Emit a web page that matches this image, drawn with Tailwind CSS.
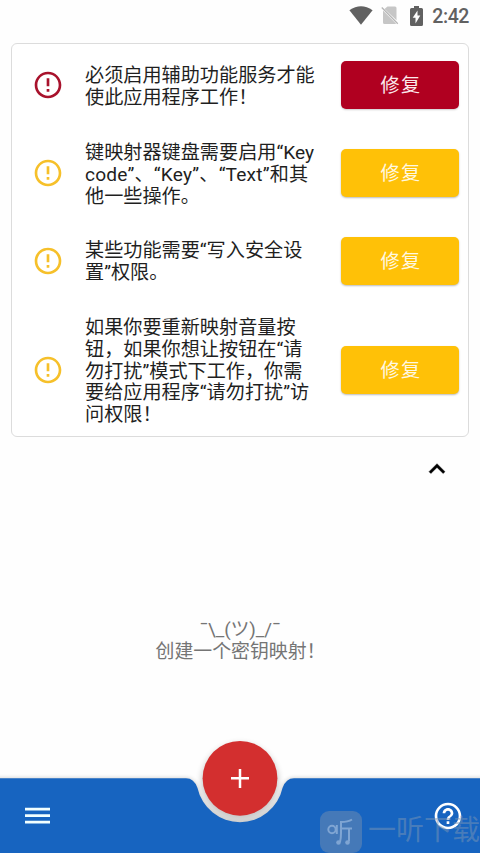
<!DOCTYPE html>
<html lang="zh-CN">
<head>
<meta charset="utf-8">
<title>Key Mapper</title>
<script src="https://cdn.jsdelivr.net/npm/@tailwindcss/browser@4"></script>
</head>
<body class="bg-white">
<svg class="hidden">
  <symbol id="alert" viewBox="0 0 24 24"><path d="M11 15h2v2h-2zm0-8h2v6h-2zm.99-5C6.47 2 2 6.48 2 12s4.47 10 9.99 10C17.52 22 22 17.52 22 12S17.52 2 11.99 2zM12 20c-4.42 0-8-3.58-8-8s3.58-8 8-8 8 3.58 8 8-3.58 8-8 8z" fill="currentColor"/></symbol>
</svg>
<main class="relative flex h-[853px] w-[480px] flex-col overflow-hidden bg-[#fefefe] font-[Roboto,'Noto_Sans_CJK_SC',sans-serif] text-[19.15px] leading-[21.8px] text-[#1f1f1f]">
  <header class="flex h-[43px] shrink-0 items-start justify-end pr-[11px] pt-[5px] text-[#616161]">
    <svg class="mr-[8px] mt-px h-[19px] w-[24px]" viewBox="0 0 24 19"><path d="M.4 4.2Q12-3.6 23.6 4.2L12 18.8z" fill="currentColor"/></svg>
    <svg class="mr-[11px] mt-[1px] h-[19px] w-[18px]" viewBox="0 0 18 19"><path d="M6.500.5H14q1.500 0 1.500 1.500v12.200L3.500 2.900zM2 4.500l13 13q-.4.500-1 .500H3.500Q2 18 2 16.500z" fill="#c6c6c6"/><path d="M.8 1.500l16 16.300" stroke="#b5b5b5" stroke-width="1.300"/></svg>
    <svg class="mr-[9px] mt-px h-[20px] w-[13px]" viewBox="0 0 13 20"><path d="M4 0h5v2h2.500Q13 2 13 3.500v15q0 1.500-1.500 1.500h-10Q0 20 0 18.500v-15Q0 2 1.500 2H4z" fill="currentColor"/><path d="M7.500 4.500v5h2.800L5.500 17.500v-5.700H2.700z" fill="#fff"/></svg>
    <span class="pt-[1px] text-[19.5px] font-medium leading-[22px] tracking-[-0.4px]">2:42</span>
  </header>

  <section class="ml-[11px] h-[394px] w-[458px] shrink-0 rounded-[6px] border-[1.5px] border-[#dcdcdc] bg-white">
    <div class="flex h-[84px] items-center pb-[3px] pl-[20px] pr-[9px]">
      <svg class="h-[32px] w-[32px] shrink-0 text-[#a8122c]"><use href="#alert"/></svg>
      <p class="ml-[21px] w-[256px] shrink-0 whitespace-nowrap pt-[4px]">必须启用辅助功能服务才能<br>使此应用程序工作！</p>
      <button class="h-[48px] w-[118px] shrink-0 rounded-[5px] bg-[#b00020] pl-[2px] pt-[2px] tracking-[1.4px] text-[#fbe9ec] shadow-[0_1px_2px_#0003]">修复</button>
    </div>
    <div class="flex h-[90px] items-center pl-[20px] pr-[9px]">
      <svg class="h-[32px] w-[32px] shrink-0 text-[#f6c02a]"><use href="#alert"/></svg>
      <p class="ml-[21px] w-[256px] shrink-0 whitespace-nowrap pt-[4px]">键映射器键盘需要启用“Key<br><span class="tracking-[0.18px]">code”、“Key”、“Text”和其</span><br>他一些操作。</p>
      <button class="h-[48px] w-[118px] shrink-0 rounded-[5px] bg-[#ffc107] pl-[2px] pt-[2px] tracking-[1.4px] text-[#fff8e1] shadow-[0_1px_2px_#0004]">修复</button>
    </div>
    <div class="flex h-[86px] items-center pl-[20px] pr-[9px]">
      <svg class="h-[32px] w-[32px] shrink-0 text-[#f6c02a]"><use href="#alert"/></svg>
      <p class="ml-[21px] w-[256px] shrink-0 whitespace-nowrap pt-[2px]">某些功能需要“写入安全设<br>置”权限。</p>
      <button class="h-[48px] w-[118px] shrink-0 rounded-[5px] bg-[#ffc107] pl-[2px] pt-[2px] tracking-[1.4px] text-[#fff8e1] shadow-[0_1px_2px_#0004]">修复</button>
    </div>
    <div class="flex h-[132px] items-center pl-[20px] pr-[9px]">
      <svg class="h-[32px] w-[32px] shrink-0 text-[#f6c02a]"><use href="#alert"/></svg>
      <p class="ml-[21px] w-[256px] shrink-0 whitespace-nowrap pt-[3px]">如果你要重新映射音量按<br>钮，如果你想让按钮在“请<br>勿打扰”模式下工作，你需<br>要给应用程序“请勿打扰”访<br>问权限！</p>
      <button class="h-[48px] w-[118px] shrink-0 rounded-[5px] bg-[#ffc107] pl-[2px] pt-[2px] tracking-[1.4px] text-[#fff8e1] shadow-[0_1px_2px_#0004]">修复</button>
    </div>
  </section>

  <div class="flex h-[64px] shrink-0 items-center justify-end pr-[27px]">
    <svg class="h-[32px] w-[32px]" viewBox="0 0 24 24"><path d="M12 8l-6 6 1.410 1.410L12 10.830l4.590 4.580L18 14z" fill="#000" stroke="#000" stroke-width=".3"/></svg>
  </div>

  <div class="flex grow flex-col items-center pt-[118px] text-[18.9px] text-[#757575]">
    <p class="tracking-[-0.1px]">¯\_(ツ)_/¯</p>
    <p class="pl-[1px]">创建一个密钥映射！</p>
  </div>

  <footer class="relative h-[123px] shrink-0">
    <svg class="absolute inset-0 h-[123px] w-[480px]" viewBox="0 730 480 123">
      <defs>
        <filter id="soft" x="-20%" y="-20%" width="140%" height="140%"><feGaussianBlur stdDeviation="3"/></filter>
        <filter id="edge" x="-5%" y="-20%" width="110%" height="140%"><feGaussianBlur stdDeviation="2"/></filter>
      </defs>
      <path d="M-10 778H186Q194 778 197.500 787A43.500 43.500 0 0 0 282.500 787Q286 778 294 778H490V870H-10z" fill="#000" opacity=".2" filter="url(#edge)"/>
      <circle cx="240" cy="782" r="38.500" fill="#000" opacity=".22" filter="url(#soft)"/>
      <path d="M0 778.300H186Q194 778.300 197.500 788A43.500 43.500 0 0 0 282.500 788Q286 778.300 294 778.300H480V853H0z" fill="#1764c0"/>
      <circle cx="240" cy="778.300" r="37.400" fill="#d32f2f"/>
      <path d="M231 778.300h18M240 769v19" stroke="#fff" stroke-width="2.500"/>
    </svg>
    <div class="relative flex h-full items-end justify-between pb-[21px] pl-[21px] pr-[16px]">
      <svg class="h-[32px] w-[32px]" viewBox="0 0 32 32"><path d="M4 9.200h25M4 15.700h25M4 22.200h25" stroke="#f2ffff" stroke-width="2.800"/></svg>
      <svg class="h-[32px] w-[32px]" viewBox="0 0 24 24"><path d="M11 18h2v-2h-2v2zm1-16C6.480 2 2 6.480 2 12s4.480 10 10 10 10-4.480 10-10S17.520 2 12 2zm0 18c-4.410 0-8-3.590-8-8s3.590-8 8-8 8 3.590 8 8-3.590 8-8 8zm0-14c-2.210 0-4 1.790-4 4h2c0-1.100.9-2 2-2s2 .9 2 2c0 2-3 1.750-3 5h2c0-2.250 3-2.500 3-5 0-2.210-1.790-4-4-4z" fill="#fff"/></svg>
    </div>
    <div class="absolute left-[320px] top-[81px] flex items-start gap-[6px] whitespace-nowrap text-[28px] leading-[42px] text-[#7a94b4]/50">
      <svg class="h-[42px] w-[42px]" viewBox="0 0 42 42"><rect width="42" height="42" rx="9" fill="#4579b8"/><g fill="none" stroke="#7fa5d3" stroke-width="2"><circle cx="12" cy="18.500" r="3.700"/><path d="M16.800 14v9M32 8.500q-4 2.500-11 2.500v11q0 5-1 9M21 17.500h11M29 17.500v13"/></g><circle cx="18.500" cy="31.500" r="2.300" fill="#7fa5d3"/><circle cx="27.500" cy="31.500" r="2.300" fill="#7fa5d3"/></svg>
      <span class="-mt-px">一听下载</span>
    </div>
  </footer>
</main>
</body>
</html>
